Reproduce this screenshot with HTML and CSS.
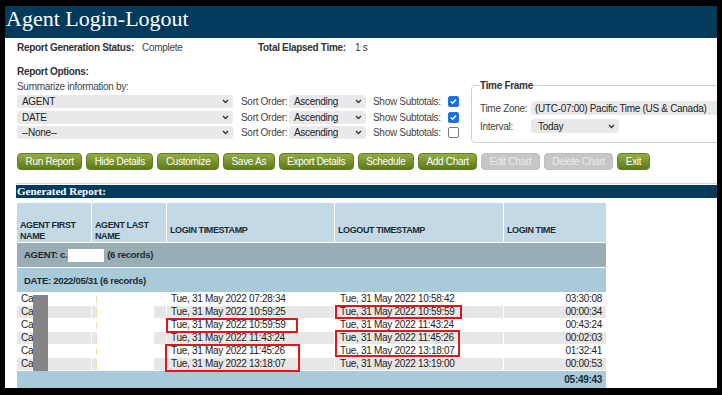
FILE: index.html
```html
<!DOCTYPE html>
<html lang="en">
  <head>
    <meta charset="UTF-8" />
    <title>Agent Login-Logout</title>
    <link rel="stylesheet" href="styles.css">
  </head>

  <body>
    <div class="page">
      <div class="title">Agent Login-Logout</div>

      <div class="content">
        <div class="status">
          <span class="label w-status">Report Generation Status:</span>
          <span class="w-complete">Complete</span>
          <span class="label w-elapsed">Total Elapsed Time:</span>
          <span>1 s</span>
        </div>

        <div class="opt-title">Report Options:</div>

        <div class="options">
          <div class="summarize">
            <div class="sub">Summarize information by:</div>
            <div class="groups">
              <div class="select wide">AGENT <svg width="7" height="5" viewBox="0 0 7 5"><path d="M1 1l2.5 2.5L6 1" /></svg></div>
              <span class="muted">Sort Order:</span>
              <div class="select sort">Ascending <svg width="7" height="5" viewBox="0 0 7 5"><path d="M1 1l2.5 2.5L6 1" /></svg></div>
              <span class="muted">Show Subtotals:</span>
              <span class="check on"><svg viewBox="0 0 11 11"><path d="M2.3 5.6l2.1 2.1 4.2-4.6" /></svg></span>

              <div class="select wide">DATE <svg width="7" height="5" viewBox="0 0 7 5"><path d="M1 1l2.5 2.5L6 1" /></svg></div>
              <span class="muted">Sort Order:</span>
              <div class="select sort">Ascending <svg width="7" height="5" viewBox="0 0 7 5"><path d="M1 1l2.5 2.5L6 1" /></svg></div>
              <span class="muted">Show Subtotals:</span>
              <span class="check on"><svg viewBox="0 0 11 11"><path d="M2.3 5.6l2.1 2.1 4.2-4.6" /></svg></span>

              <div class="select wide">--None-- <svg width="7" height="5" viewBox="0 0 7 5"><path d="M1 1l2.5 2.5L6 1" /></svg></div>
              <span class="muted">Sort Order:</span>
              <div class="select sort">Ascending <svg width="7" height="5" viewBox="0 0 7 5"><path d="M1 1l2.5 2.5L6 1" /></svg></div>
              <span class="muted">Show Subtotals:</span>
              <span class="check"></span>
            </div>
          </div>

          <fieldset class="timeframe">
            <legend>Time Frame</legend>
            <div class="tf-row first">
              <span class="tf-label">Time Zone:</span>
              <div class="select tz">(UTC-07:00) Pacific Time (US &amp; Canada)</div>
            </div>
            <div class="tf-row">
              <span class="tf-label">Interval:</span>
              <div class="select interval">Today <svg width="7" height="5" viewBox="0 0 7 5"><path d="M1 1l2.5 2.5L6 1" /></svg></div>
            </div>
          </fieldset>
        </div>

        <div class="buttons">
          <span class="btn">Run Report</span>
          <span class="btn">Hide Details</span>
          <span class="btn">Customize</span>
          <span class="btn">Save As</span>
          <span class="btn">Export Details</span>
          <span class="btn">Schedule</span>
          <span class="btn">Add Chart</span>
          <span class="btn off">Edit Chart</span>
          <span class="btn off">Delete Chart</span>
          <span class="btn">Exit</span>
        </div>
      </div>

      <div class="rule"></div>
      <div class="genbar">Generated Report:</div>

      <div class="report">
        <table>
          <colgroup>
            <col class="c-first" />
            <col class="c-last" />
            <col class="c-stamp" />
            <col class="c-stamp2" />
            <col class="c-time" />
          </colgroup>
          <tr class="head">
            <th>AGENT FIRST NAME</th>
            <th>AGENT LAST NAME</th>
            <th>LOGIN TIMESTAMP</th>
            <th>LOGOUT TIMESTAMP</th>
            <th>LOGIN TIME</th>
          </tr>
          <tr class="agent">
            <td colspan="5">AGENT: c.<span class="blank"></span>(6 records)</td>
          </tr>
          <tr class="date">
            <td colspan="5">DATE: 2022/05/31 (6 records)</td>
          </tr>
          <tr class="row">
            <td>Ca</td><td><span class="tick"></span></td>
            <td>Tue, 31 May 2022 07:28:34</td><td class="out">Tue, 31 May 2022 10:58:42</td><td class="num">03:30:08</td>
          </tr>
          <tr class="row alt">
            <td>Ca</td><td><span class="tick"></span></td>
            <td>Tue, 31 May 2022 10:59:25</td><td class="out">Tue, 31 May 2022 10:59:59</td><td class="num">00:00:34</td>
          </tr>
          <tr class="row">
            <td>Ca</td><td><span class="tick"></span></td>
            <td>Tue, 31 May 2022 10:59:59</td><td class="out">Tue, 31 May 2022 11:43:24</td><td class="num">00:43:24</td>
          </tr>
          <tr class="row alt">
            <td>Ca</td><td><span class="tick"></span></td>
            <td>Tue, 31 May 2022 11:43:24</td><td class="out">Tue, 31 May 2022 11:45:26</td><td class="num">00:02:03</td>
          </tr>
          <tr class="row">
            <td>Ca</td><td><span class="tick"></span></td>
            <td>Tue, 31 May 2022 11:45:26</td><td class="out">Tue, 31 May 2022 13:18:07</td><td class="num">01:32:41</td>
          </tr>
          <tr class="row alt">
            <td>Ca</td><td><span class="tick"></span></td>
            <td>Tue, 31 May 2022 13:18:07</td><td class="out">Tue, 31 May 2022 13:19:00</td><td class="num">00:00:53</td>
          </tr>
          <tr class="total">
            <td colspan="5">05:49:43</td>
          </tr>
        </table>

        <!-- redactions and review marks drawn over the table -->
        <div class="hide-first"></div>
        <div class="hide-last"></div>
        <div class="mark mark-a"></div>
        <div class="mark mark-b"></div>
        <div class="mark mark-c"></div>
        <div class="mark mark-d"></div>
      </div>
    </div>
  </body>
</html>
```

FILE: styles.css
```css
* {
  box-sizing: border-box;
}

body {
  margin: 0;
  padding: 6px 5px 0;
  background: #000;
  font-family: "Liberation Sans", Arial, sans-serif;
  font-size: 10px;
  letter-spacing: -0.3px;
  color: #333;
}

.page {
  width: 712px;
  height: 382px;
  background: #fff;
  overflow: hidden;
}

.title {
  height: 32px;
  padding-left: 1px;
  background: #023a5c;
  color: #fff;
  font-family: "Liberation Serif", serif;
  font-size: 22px;
  line-height: 26px;
  letter-spacing: 0;
}

.content {
  padding-left: 12px;
}

.status {
  display: flex;
  margin-top: 4px;
  line-height: 11px;
}

.label,
.opt-title {
  font-weight: bold;
}

.w-status {
  width: 125px;
}

.w-complete {
  width: 116px;
  color: #444;
}

.w-elapsed {
  width: 97px;
}

.opt-title {
  margin-top: 13px;
  line-height: 11px;
}

.options {
  display: flex;
  align-items: flex-start;
  margin-top: 4px;
}

.summarize {
  flex-shrink: 0;
}

.sub {
  line-height: 11px;
  color: #444;
}

.groups {
  display: grid;
  grid-template-columns: 224px 48px 84px 75px 12px;
  grid-auto-rows: 13px;
  row-gap: 2.5px;
  align-items: center;
  margin-top: 3px;
}

.muted {
  color: #444;
  white-space: nowrap;
}

.select {
  display: flex;
  flex-shrink: 0;
  align-items: center;
  justify-content: space-between;
  height: 13px;
  padding: 0 4px 0 5px;
  background: #e9e9ec;
  border-radius: 3px;
  color: #222;
  line-height: 13px;
  white-space: nowrap;
}

.select svg path {
  fill: none;
  stroke: #333;
  stroke-width: 1.3;
}

.select.wide {
  width: 216px;
}

.select.sort {
  width: 77px;
}

.check {
  display: block;
  width: 11px;
  height: 11px;
  border: 1px solid #777;
  border-radius: 2px;
  background: #fff;
}

.check.on {
  border-color: #1f6fdc;
  background: #1f6fdc;
}

.check svg {
  display: block;
  width: 9px;
  height: 9px;
}

.check svg path {
  fill: none;
  stroke: #fff;
  stroke-width: 1.6;
}

.timeframe {
  flex-shrink: 0;
  width: 300px;
  min-width: 0;
  margin: -1px 0 0 11px;
  padding: 0 8px 9px;
  border: 1px solid #cfcfcf;
  border-radius: 4px;
}

.timeframe legend {
  padding: 0;
  font-weight: bold;
  line-height: 11px;
  color: #333;
}

.tf-row {
  display: flex;
  align-items: center;
  height: 14px;
  margin-top: 4px;
}

.tf-row.first {
  margin-top: 10px;
}

.tf-label {
  flex-shrink: 0;
  width: 51px;
  color: #444;
  white-space: nowrap;
}

.select.tz {
  width: 260px;
  height: 14px;
  padding-left: 4px;
}

.select.interval {
  width: 88px;
  height: 14px;
  padding-left: 7px;
}

.buttons {
  display: flex;
  gap: 4px;
  margin-top: 10px;
}

.btn {
  height: 17px;
  padding: 0 7.5px;
  border: 1px solid #627f1d;
  border-radius: 4px;
  background: linear-gradient(#93ad45, #5d7a1b);
  color: #fff;
  line-height: 15px;
  white-space: nowrap;
}

.btn.off {
  border-color: #bdbdbd;
  background: #c6c6c6;
  color: #ebebeb;
}

.rule {
  margin: 13px 0 0 11px;
  border-top: 1px solid #d6d6d6;
}

.genbar {
  height: 13px;
  margin: 1px 0 0 11px;
  padding-left: 1px;
  background: #023a5c;
  color: #fff;
  font-family: "Liberation Serif", serif;
  font-size: 11px;
  font-weight: bold;
  line-height: 13px;
  letter-spacing: 0;
}

.report {
  position: relative;
  margin: 4px 0 0 11px;
}

table {
  width: 591px;
  table-layout: fixed;
  border-collapse: separate;
  border-spacing: 1px;
}

.c-first,
.c-last {
  width: 74px;
}

.c-stamp {
  width: 167px;
}

.c-stamp2 {
  width: 168px;
}

.c-time {
  width: 102px;
}

.head {
  height: 39px;
}

th {
  padding: 16px 3px 0;
  background: #c3dae6;
  color: #1d2b33;
  font-size: 9px;
  font-weight: bold;
  letter-spacing: -0.4px;
  line-height: 11px;
  text-align: left;
  vertical-align: middle;
}

.agent,
.date {
  height: 24px;
}

.agent td,
.date td {
  padding: 0 7px;
  color: #1d2b33;
  font-size: 9.5px;
  font-weight: bold;
}

.agent td {
  background: #9aaeb7;
}

.date td {
  background: #a9cad9;
}

.blank {
  display: inline-block;
  width: 36px;
  height: 13px;
  margin: 0 3px 0 1px;
  background: #fff;
  vertical-align: middle;
}

.row {
  height: 12px;
}

.row td {
  padding: 0 4px;
  line-height: 12px;
  color: #222;
  white-space: nowrap;
  overflow: hidden;
}

.row.alt td {
  background: #e7e7e7;
}

.row td.out {
  padding-left: 5px;
}

.row td.num {
  text-align: right;
}

.tick {
  display: inline-block;
  width: 1px;
  height: 7px;
  background: #f1dcb2;
  vertical-align: middle;
}

.total {
  height: 17px;
}

.total td {
  padding: 0 4px;
  background: #a9cad9;
  color: #1d2b33;
  font-weight: bold;
  text-align: right;
}

.hide-first {
  position: absolute;
  left: 17px;
  top: 93px;
  width: 15px;
  height: 76px;
  background: #858585;
}

.hide-last {
  position: absolute;
  left: 81px;
  top: 91px;
  width: 57px;
  height: 78px;
  background: #fff;
}

.mark {
  position: absolute;
  border: 2px solid #e3141b;
}

.mark-a {
  left: 150px;
  top: 116px;
  width: 132px;
  height: 15px;
}

.mark-b {
  left: 149px;
  top: 142px;
  width: 135px;
  height: 28px;
}

.mark-c {
  left: 319px;
  top: 103px;
  width: 127px;
  height: 14px;
}

.mark-d {
  left: 319px;
  top: 128px;
  width: 125px;
  height: 27px;
}
```
